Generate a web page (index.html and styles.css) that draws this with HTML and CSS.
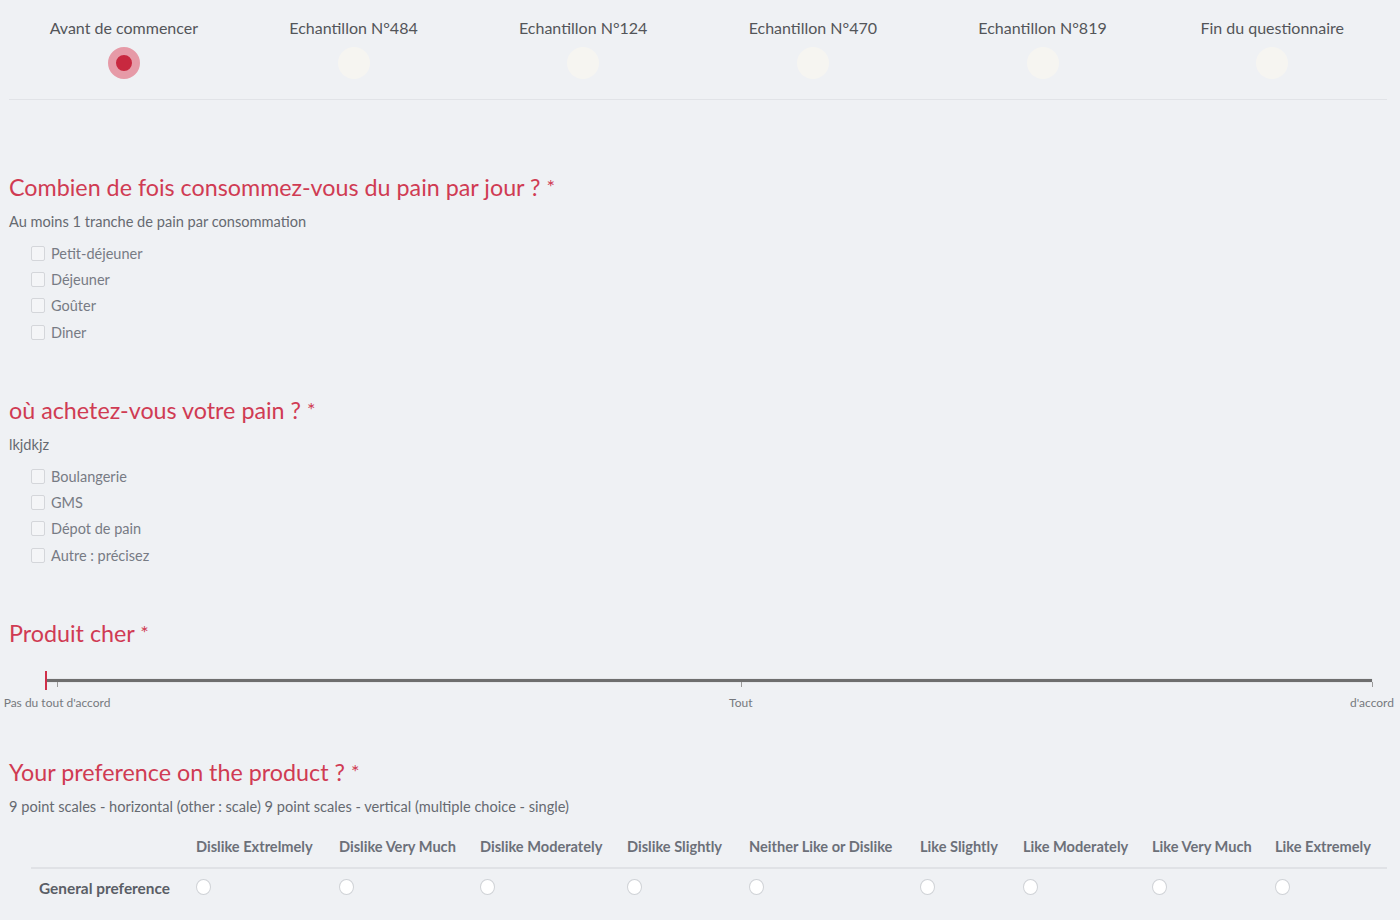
FILE: index.html
```html
<!DOCTYPE html>
<html>
<head>
  <title>Questionnaire</title>
  <link rel="stylesheet" href="styles.css">
</head>
<body>
  <div class="page">

    <!-- Steps -->
    <div class="steps">
      <div class="step current">
        <div class="step-label">Avant de commencer</div>
        <div class="step-dot"></div>
      </div>
      <div class="step">
        <div class="step-label">Echantillon N°484</div>
        <div class="step-dot"></div>
      </div>
      <div class="step">
        <div class="step-label">Echantillon N°124</div>
        <div class="step-dot"></div>
      </div>
      <div class="step">
        <div class="step-label">Echantillon N°470</div>
        <div class="step-dot"></div>
      </div>
      <div class="step">
        <div class="step-label">Echantillon N°819</div>
        <div class="step-dot"></div>
      </div>
      <div class="step">
        <div class="step-label">Fin du questionnaire</div>
        <div class="step-dot"></div>
      </div>
    </div>

    <!-- Question 1 -->
    <div class="question q-first">
      <h2 class="question-title">Combien de fois consommez-vous du pain par jour ? <span class="required">*</span></h2>
      <div class="question-help">Au moins 1 tranche de pain par consommation</div>
      <ul class="choices">
        <li><label><span class="checkbox"></span>Petit-déjeuner</label></li>
        <li><label><span class="checkbox"></span>Déjeuner</label></li>
        <li><label><span class="checkbox"></span>Goûter</label></li>
        <li><label><span class="checkbox"></span>Diner</label></li>
      </ul>
    </div>

    <!-- Question 2 -->
    <div class="question">
      <h2 class="question-title">où achetez-vous votre pain ? <span class="required">*</span></h2>
      <div class="question-help">lkjdkjz</div>
      <ul class="choices">
        <li><label><span class="checkbox"></span>Boulangerie</label></li>
        <li><label><span class="checkbox"></span>GMS</label></li>
        <li><label><span class="checkbox"></span>Dépot de pain</label></li>
        <li><label><span class="checkbox"></span>Autre : précisez</label></li>
      </ul>
    </div>

    <!-- Question 3 -->
    <div class="question q-scale">
      <h2 class="question-title">Produit cher <span class="required">*</span></h2>
      <div class="scale">
        <div class="scale-track">
          <div class="scale-handle"></div>
          <span class="scale-tick tick-start"></span>
          <span class="scale-tick tick-mid"></span>
          <span class="scale-tick tick-end"></span>
          <span class="scale-label tick-start">Pas du tout d'accord</span>
          <span class="scale-label tick-mid">Tout</span>
          <span class="scale-label tick-end">d'accord</span>
        </div>
      </div>
    </div>

    <!-- Question 4 -->
    <div class="question">
      <h2 class="question-title">Your preference on the product ? <span class="required">*</span></h2>
      <div class="question-help">9 point scales - horizontal (other : scale) 9 point scales - vertical (multiple choice - single)</div>
      <div class="matrix">
        <div class="matrix-head"></div>
        <div class="matrix-head">Dislike Extrelmely</div>
        <div class="matrix-head">Dislike Very Much</div>
        <div class="matrix-head">Dislike Moderately</div>
        <div class="matrix-head">Dislike Slightly</div>
        <div class="matrix-head">Neither Like or Dislike</div>
        <div class="matrix-head">Like Slightly</div>
        <div class="matrix-head">Like Moderately</div>
        <div class="matrix-head">Like Very Much</div>
        <div class="matrix-head">Like Extremely</div>

        <div class="matrix-row-label">General preference</div>
        <div class="matrix-cell"><span class="radio"></span></div>
        <div class="matrix-cell"><span class="radio"></span></div>
        <div class="matrix-cell"><span class="radio"></span></div>
        <div class="matrix-cell"><span class="radio"></span></div>
        <div class="matrix-cell"><span class="radio"></span></div>
        <div class="matrix-cell"><span class="radio"></span></div>
        <div class="matrix-cell"><span class="radio"></span></div>
        <div class="matrix-cell"><span class="radio"></span></div>
        <div class="matrix-cell"><span class="radio"></span></div>
      </div>
    </div>

  </div>
</body>
</html>
```

FILE: styles.css
```css
body {
  margin: 0;
  background-color: #eff1f4;
  font-family: "Lato", "Noto Sans", sans-serif;
  color: #6b6f77;
}

.page {
  padding: 0 13px 0 9px;
}

/* Steps bar */

.steps {
  display: flex;
  padding: 18px 0 20px;
  border-bottom: 1px solid #e1e3e7;
}

.step {
  flex: 1;
  display: flex;
  flex-direction: column;
  align-items: center;
}

.step-label {
  font-size: 16px;
  line-height: 20px;
  color: #535559;
}

.step-dot {
  width: 32px;
  height: 32px;
  margin-top: 9px;
  border-radius: 50%;
  background-color: #f6f5f1;
  box-sizing: border-box;
}

.step.current .step-dot {
  background-color: #c8283f;
  border: 8px solid #e69aa7;
}

/* Questions */

.question {
  margin-top: 49px;
}

.question.q-first {
  margin-top: 71px;
}

.question-title {
  margin: 0;
  font-size: 23.3px;
  line-height: 30px;
  font-weight: normal;
  color: #d03b53;
}

.required {
  font-size: 20px;
  vertical-align: 2px;
}

.question-help {
  margin-top: 10px;
  font-size: 14.6px;
  line-height: 20px;
  color: #666a71;
}

.choices {
  list-style: none;
  margin: 8px 0 0;
  padding: 0 0 0 22px;
}

.choices li {
  height: 26.3px;
  display: flex;
  align-items: center;
}

.choices label {
  display: flex;
  align-items: center;
  font-size: 14.5px;
  color: #777b84;
}

.checkbox {
  width: 14px;
  height: 15px;
  margin-right: 6px;
  border: 1px solid #d4d6da;
  border-radius: 2px;
  background-color: #f4f5f7;
  box-sizing: border-box;
}

/* Slider */

.scale {
  padding: 31px 15px 30px 37px;
}

.scale-track {
  position: relative;
  height: 3px;
  background-color: #6e6e6e;
  box-shadow: 0 0 1px #9a9a9a;
}

.scale-handle {
  position: absolute;
  left: -1px;
  top: -8px;
  width: 2px;
  height: 19px;
  background-color: #d0304a;
}

.scale-tick {
  position: absolute;
  top: 3px;
  width: 1px;
  height: 5px;
  background-color: #9a9a9a;
}

.scale-label {
  position: absolute;
  top: 17px;
  font-size: 12px;
  line-height: 14px;
  color: #76797e;
  white-space: nowrap;
  transform: translateX(-50%);
}

.tick-start {
  left: 0.83%;
}

.tick-mid {
  left: 52.4%;
}

.tick-end {
  left: 100%;
}

.q-scale + .question {
  margin-top: 44px;
}

/* Matrix */

.matrix {
  display: grid;
  grid-template-columns: 157px 143px 141px 147px 122px 171px 103px 129px 123px 1fr;
  margin: 20px 0 0 22px;
}

.matrix-head {
  padding: 0 0 10px 8px;
  font-size: 14.6px;
  line-height: 20px;
  font-weight: bold;
  color: #6c7079;
  white-space: nowrap;
  border-bottom: 2px solid #e0e2e6;
}

.matrix-row-label {
  padding: 9px 0 0 8px;
  font-size: 15.4px;
  line-height: 20px;
  font-weight: bold;
  color: #5a5e66;
}

.matrix-cell {
  padding: 10px 0 0 8px;
}

.radio {
  display: block;
  width: 15px;
  height: 16px;
  border: 1px solid #cfd2d6;
  border-radius: 50%;
  background-color: #ffffff;
  box-sizing: border-box;
}
```
